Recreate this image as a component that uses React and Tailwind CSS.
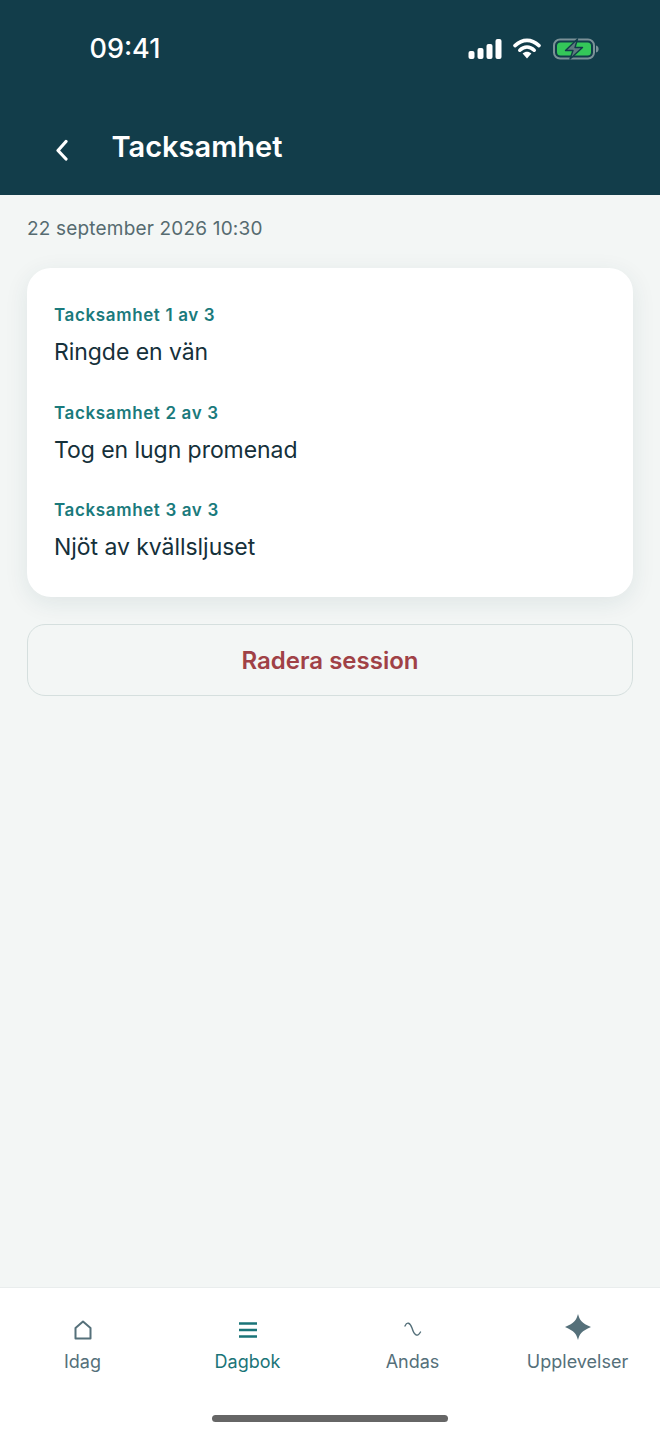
import React from "react";

const font = "font-['Inter','Noto_Sans',sans-serif]";

function StatusIcons() {
  return (
    <div className="flex items-center">
      <svg width="34" height="20" viewBox="0 0 34 20">
        <rect x="0.5" y="12" width="6" height="8" rx="2" fill="#fff" />
        <rect x="9.5" y="9" width="6" height="11" rx="2" fill="#fff" />
        <rect x="18.5" y="5" width="6" height="15" rx="2" fill="#fff" />
        <rect x="27.5" y="0" width="6" height="20" rx="2" fill="#fff" />
      </svg>
      <svg width="28" height="21" viewBox="0 0 28 21" className="ml-[11px]">
        <path d="M2 7.6 C9.5 0.6 18.5 0.6 26 7.6" fill="none" stroke="#fff" strokeWidth="3.6" strokeLinecap="round" />
        <path d="M6.8 12.2 C11.2 8 16.8 8 21.2 12.2" fill="none" stroke="#fff" strokeWidth="3.6" strokeLinecap="round" />
        <path d="M9.6 15.6 C12.4 13 15.6 13 18.4 15.6 L14 20.6 Z" fill="#fff" />
      </svg>
      <svg width="46" height="22" viewBox="0 0 46 22" className="ml-[12px]">
        <rect x="1" y="1.5" width="40" height="19" rx="6" fill="none" stroke="#7b9197" strokeWidth="2" />
        <rect x="4" y="4.5" width="34" height="13" rx="3.5" fill="#34c759" />
        <path d="M43 7.5 C45 8 45.6 9.5 45.6 11 C45.6 12.5 45 14 43 14.5 Z" fill="#7b9197" />
        <path d="M24.5 1 L12.5 12.5 H20 L17 21 L29.5 9.5 H22 Z" fill="#5f7a80" stroke="#123d4a" strokeWidth="1.4" strokeLinejoin="round" />
      </svg>
    </div>
  );
}

function Entry({ label, text }) {
  return (
    <div className="flex flex-col">
      <div className="text-[17px] leading-[24px] font-semibold tracking-[0.63px] text-[#1a7a7c]">{label}</div>
      <div className="mt-[13px] text-[23px] leading-[24px] tracking-[-0.05px] text-[#15303a]">{text}</div>
    </div>
  );
}

function Tab({ label, active, children }) {
  return (
    <div className="flex-1 flex flex-col items-center">
      <div className="h-[30px] flex items-center justify-center">{children}</div>
      <div className={`mt-[5px] text-[18px] leading-[24px] ${active ? "text-[#1a7478]" : "text-[#55707a]"}`}>{label}</div>
    </div>
  );
}

export default function App() {
  return (
    <div className={`${font} w-[660px] h-[1434px] flex flex-col bg-[#f3f6f5] overflow-hidden`}>
      <header className="h-[195px] shrink-0 bg-[#123d4a] flex flex-col">
        <div className="h-[97px] flex items-center justify-between pl-[89.5px] pr-[61px]">
          <div className="text-[27px] leading-[32px] font-medium text-white">09:41</div>
          <StatusIcons />
        </div>
        <div className="flex items-center pl-[55px] pt-[32px]">
          <svg width="13" height="22" viewBox="0 0 13 22" className="mt-[5px]">
            <path d="M11 2.5 L3 11.5 L11 20" fill="none" stroke="#fff" strokeWidth="3.2" strokeLinecap="round" strokeLinejoin="round" />
          </svg>
          <div className="ml-[43.5px] text-[29px] leading-[36px] font-semibold text-white">Tacksamhet</div>
        </div>
      </header>

      <main className="flex-1 flex flex-col px-[27px]">
        <div className="mt-[20.5px] text-[19px] leading-[26px] tracking-[0.18px] text-[#566b70]">22 september 2026 10:30</div>
        <section className="mt-[26.5px] h-[329px] rounded-[24px] bg-white shadow-[0_6px_24px_rgba(18,61,74,0.09)] px-[27px] pt-[35px] flex flex-col gap-[36.5px]">
          <Entry label="Tacksamhet 1 av 3" text="Ringde en vän" />
          <Entry label="Tacksamhet 2 av 3" text="Tog en lugn promenad" />
          <Entry label="Tacksamhet 3 av 3" text="Njöt av kvällsljuset" />
        </section>
        <button className="mt-[27px] h-[72px] pt-[2px] rounded-[18px] border border-[#d5dfde] flex items-center justify-center text-[24px] font-semibold text-[#a04146]">
          Radera session
        </button>
      </main>

      <nav className="h-[147px] shrink-0 bg-white border-t border-[#e9eded] flex flex-col">
        <div className="flex px-0 pt-[27px]">
          <Tab label="Idag">
            <svg width="18" height="20" viewBox="0 0 18 20">
              <path d="M1.5 18.5 V8 L9 1.5 L16.5 8 V18.5 Z" fill="none" stroke="#55707a" strokeWidth="2" strokeLinejoin="round" />
            </svg>
          </Tab>
          <Tab label="Dagbok" active>
            <svg width="18" height="16" viewBox="0 0 18 16">
              <path d="M0 1.5 H18 M0 8 H18 M0 14.5 H18" stroke="#1a7478" strokeWidth="2.4" />
            </svg>
          </Tab>
          <Tab label="Andas">
            <svg width="18" height="16" viewBox="0 0 18 16">
              <path d="M1 4 C3 -0.5 6 0.5 8 6 C10 12.5 13 16 16.5 10" fill="none" stroke="#55707a" strokeWidth="1.4" strokeLinecap="round" />
            </svg>
          </Tab>
          <Tab label="Upplevelser">
            <svg width="26" height="26" viewBox="0 0 26 26" className="mb-[6px]">
              <path d="M13 0 C14.6 6 16.5 9 26 13 C16.5 17 14.6 20 13 26 C11.4 20 9.5 17 0 13 C9.5 9 11.4 6 13 0 Z" fill="#55707a" />
            </svg>
          </Tab>
        </div>
        <div className="mt-auto mb-[12px] mx-auto w-[236px] h-[7px] rounded-full bg-[#666]" />
      </nav>
    </div>
  );
}
